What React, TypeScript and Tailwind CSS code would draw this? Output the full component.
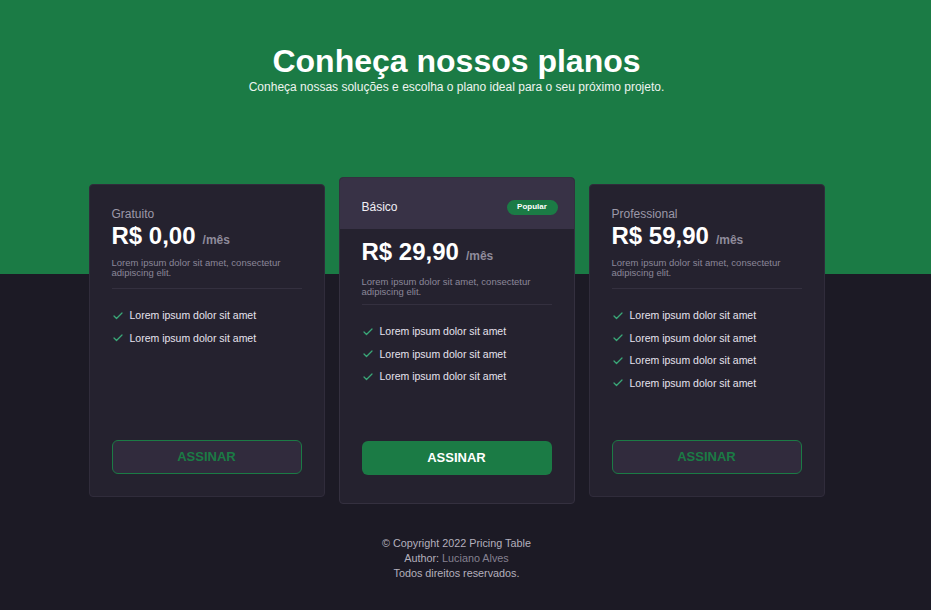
import { Check } from "lucide-react"

type Plan = {
  name: string
  price: string
  features: number
  popular?: boolean
}

const plans: Plan[] = [
  { name: "Gratuito", price: "R$ 0,00", features: 2 },
  { name: "Básico", price: "R$ 29,90", features: 3, popular: true },
  { name: "Professional", price: "R$ 59,90", features: 4 },
]

function Price({ value }: { value: string }) {
  return (
    <div className="flex items-baseline gap-[7px]">
      <span className="text-[24px] leading-[28px] font-bold text-white">{value}</span>
      <span className="text-[12px] font-bold text-[#8f8b9b]">/mês</span>
    </div>
  )
}

function Features({ count }: { count: number }) {
  return (
    <ul className="flex flex-col gap-[7.5px] pt-[19px]">
      {Array.from({ length: count }).map((_, i) => (
        <li key={i} className="flex items-center gap-[6px] text-[10.5px] leading-[15px] text-[#e6e3ee]">
          <Check size={12} strokeWidth={2.5} className="text-[#3aa878]" />
          Lorem ipsum dolor sit amet
        </li>
      ))}
    </ul>
  )
}

function Description({ tight }: { tight?: boolean }) {
  return (
    <p
      className={
        tight
          ? "text-[9.5px] leading-[10px] text-[#8b8799] pb-[7px] border-b border-[#34303f]"
          : "text-[9.5px] leading-[10px] text-[#8b8799] pb-[10px] border-b border-[#34303f]"
      }
    >
      Lorem ipsum dolor sit amet, consectetur adipiscing elit.
    </p>
  )
}

function PlanCard({ plan }: { plan: Plan }) {
  if (plan.popular) {
    return (
      <div className="w-[236px] h-[327px] flex flex-col rounded bg-[#25222f] border border-[#34303f] overflow-hidden">
        <div className="flex items-center justify-between bg-[#383246] pl-[22px] pr-[16px] pt-[20px] pb-[13px]">
          <span className="text-[12px] text-[#f1eff5]">{plan.name}</span>
          <span className="w-[51px] h-[15px] flex items-center justify-center rounded-full bg-[#1b7b45] text-[8px] font-bold text-white">
            Popular
          </span>
        </div>
        <div className="flex flex-col flex-1 px-[22px] pt-[9px] pb-[28px]">
          <Price value={plan.price} />
          <div className="pt-[11px]">
            <Description tight />
          </div>
          <Features count={plan.features} />
          <button className="mt-auto h-[34px] w-full rounded-md bg-[#1b7b45] text-[13px] font-bold text-white">
            ASSINAR
          </button>
        </div>
      </div>
    )
  }
  return (
    <div className="w-[236px] h-[313px] flex flex-col rounded bg-[#25222f] border border-[#302c3b] px-[22px] pt-[22px] pb-[22px]">
      <span className="text-[12px] leading-[15px] text-[#9c98a8]">{plan.name}</span>
      <Price value={plan.price} />
      <div className="pt-[8px]">
        <Description />
      </div>
      <Features count={plan.features} />
      <button className="mt-auto h-[34px] w-full rounded-md border border-[#1b7b45] bg-[#312b3d] text-[13px] font-bold text-[#1b7b45]">
        ASSINAR
      </button>
    </div>
  )
}

export default function App() {
  return (
    <div
      className="min-h-screen bg-[linear-gradient(to_bottom,#1b7b45_274px,#1c1a25_274px)] pr-[18px] pt-[43px] pb-8 flex flex-col items-center"
      style={{ fontFamily: '"Liberation Sans", Arial, sans-serif' }}
    >
      <header className="flex flex-col items-center text-white">
        <h1 className="text-[32px] leading-[37px] font-bold">Conheça nossos planos</h1>
        <p className="text-[12px] leading-[14px] text-[#eef5f0]">
          Conheça nossas soluções e escolha o plano ideal para o seu próximo projeto.
        </p>
      </header>

      <main className="mt-[83px] flex items-center gap-[14px]">
        {plans.map((p) => (
          <PlanCard key={p.name} plan={p} />
        ))}
      </main>

      <footer className="mt-[32px] flex flex-col items-center text-[10.8px] leading-[15px] text-[#b4b0bd]">
        <span>© Copyright 2022 Pricing Table</span>
        <span>
          Author: <span className="text-[#858191]">Luciano Alves</span>
        </span>
        <span>Todos direitos reservados.</span>
      </footer>
    </div>
  )
}
